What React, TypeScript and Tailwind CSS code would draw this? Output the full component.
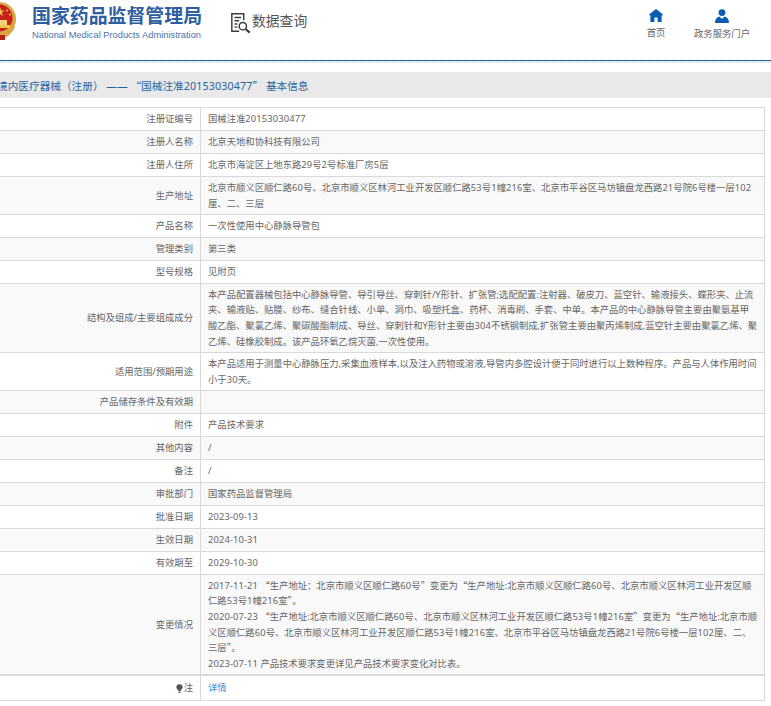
import { Fragment } from "react";

const FONT = "font-['Noto_Sans','Noto_Sans_CJK_SC',sans-serif]";

type Row = { label: string; lines: string[]; h: string };

const rows: Row[] = [
  { label: "注册证编号", lines: ["国械注准20153030477"], h: "h-[23px]" },
  { label: "注册人名称", lines: ["北京天地和协科技有限公司"], h: "h-[23px]" },
  { label: "注册人住所", lines: ["北京市海淀区上地东路29号2号标准厂房5层"], h: "h-[23px]" },
  {
    label: "生产地址",
    lines: [
      "北京市顺义区顺仁路60号、北京市顺义区林河工业开发区顺仁路53号1幢216室、北京市平谷区马坊镇盘龙西路21号院6号楼一层102",
      "厘、二、三层",
    ],
    h: "h-[38px]",
  },
  { label: "产品名称", lines: ["一次性使用中心静脉导管包"], h: "h-[23px]" },
  { label: "管理类别", lines: ["第三类"], h: "h-[23px]" },
  { label: "型号规格", lines: ["见附页"], h: "h-[23px]" },
  {
    label: "结构及组成/主要组成成分",
    lines: [
      "本产品配置器械包括中心静脉导管、导引导丝、穿刺针/Y形针、扩张管;选配配置:注射器、破皮刀、蓝空针、输液接头、蝶形夹、止流",
      "夹、输液贴、贴膜、纱布、缝合针线、小单、洞巾、吸塑托盒、药杯、消毒刷、手套、中单。本产品的中心静脉导管主要由聚氨基甲",
      "酸乙酯、聚氯乙烯、聚碳酸酯制成、导丝、穿刺针和Y形针主要由304不锈钢制成,扩张管主要由聚丙烯制成,蓝空针主要由聚氯乙烯、聚",
      "乙烯、硅橡胶制成。该产品环氧乙烷灭菌,一次性使用。",
    ],
    h: "h-[69px]",
  },
  {
    label: "适用范围/预期用途",
    lines: [
      "本产品适用于测量中心静脉压力,采集血液样本,以及注入药物或溶液,导管内多腔设计便于同时进行以上数种程序。产品与人体作用时间",
      "小于30天。",
    ],
    h: "h-[38px]",
  },
  { label: "产品储存条件及有效期", lines: [""], h: "h-[23px]" },
  { label: "附件", lines: ["产品技术要求"], h: "h-[23px]" },
  { label: "其他内容", lines: ["/"], h: "h-[23px]" },
  { label: "备注", lines: ["/"], h: "h-[23px]" },
  { label: "审批部门", lines: ["国家药品监督管理局"], h: "h-[23px]" },
  { label: "批准日期", lines: ["2023-09-13"], h: "h-[23px]" },
  { label: "生效日期", lines: ["2024-10-31"], h: "h-[23px]" },
  { label: "有效期至", lines: ["2029-10-30"], h: "h-[23px]" },
  {
    label: "变更情况",
    lines: [
      "2017-11-21 “生产地址：北京市顺义区顺仁路60号”变更为“生产地址:北京市顺义区顺仁路60号、北京市顺义区林河工业开发区顺",
      "仁路53号1幢216室”。",
      "2020-07-23 “生产地址:北京市顺义区顺仁路60号、北京市顺义区林河工业开发区顺仁路53号1幢216室”变更为“生产地址:北京市顺",
      "义区顺仁路60号、北京市顺义区林河工业开发区顺仁路53号1幢216室、北京市平谷区马坊镇盘龙西路21号院6号楼一层102厘、二、",
      "三层”。",
      "2023-07-11 产品技术要求变更详见产品技术要求变化对比表。",
    ],
    h: "h-[100px]",
  },
];

// quotes take the CJK glyph (full width), digit runs are a touch wider than Noto's
function Txt({ s }: { s: string }) {
  const parts = s.split(/([“”]|[0-9]+)/);
  return (
    <>
      {parts.map((p, i) => {
        if (p === "“" || p === "”") {
          return (
            <span key={i} className="font-['Noto_Sans_CJK_SC',sans-serif]">
              {p}
            </span>
          );
        }
        if (/^[0-9]/.test(p)) {
          return (
            <span key={i} className="tracking-[0.15px]">
              {p}
            </span>
          );
        }
        return <Fragment key={i}>{p}</Fragment>;
      })}
    </>
  );
}

function Emblem() {
  return (
    <svg viewBox="0 0 40 42" className="w-[40px] h-[42px] shrink-0">
      <circle cx="20" cy="18" r="17" fill="#d9a441" />
      <circle cx="20" cy="17" r="13.5" fill="#c8201c" />
      <path d="M21 6l1.200 3.400h3.500l-2.800 2.100 1 3.400-2.900-2-2.900 2 1-3.400-2.800-2.100h3.500z" fill="#f2c64a" />
      <circle cx="28" cy="9.500" r="1" fill="#f2c64a" />
      <circle cx="31" cy="13.500" r="1" fill="#f2c64a" />
      <path d="M9 24h22v3H9z" fill="#f2c64a" />
      <path d="M12 19h16v5H12z" fill="#f2d27a" />
      <path d="M4 26c4 8 10 12 16 12s12-4 16-12l-3-2c-3 6-8 9-13 9s-10-3-13-9z" fill="#d9a441" />
      <path d="M14 34h12v5H14z" fill="#b8201c" />
    </svg>
  );
}

function DocSearchIcon() {
  return (
    <svg viewBox="0 0 24 24" className="w-[22px] h-[22px] shrink-0" fill="none" stroke="#3c3c3c" strokeWidth="1.600">
      <path d="M15 9V2H2v19h8" />
      <path d="M5 6h7M5 9.500h5M5 13h3M5 16.500h3" />
      <circle cx="14" cy="15.500" r="4" />
      <path d="M17 18.500l4.500 4" strokeWidth="2.400" />
    </svg>
  );
}

function HomeIcon() {
  return (
    <svg viewBox="0 0 14 13" className="w-[14px] h-[13px]" fill="#0a5cb0">
      <path d="M7 0l7 5.600-.9 1-.5-.4V13H8.600V8.600H5.400V13H1.400V6.200l-.5.4-.9-1z" />
    </svg>
  );
}

function PersonIcon() {
  return (
    <svg viewBox="0 0 14 14" className="w-[14px] h-[14px]" fill="#0a5cb0">
      <circle cx="7" cy="3.600" r="3.400" />
      <path d="M0 14c0-3.600 1.800-6 4.400-6.400L7 10l2.600-2.400C12.200 8 14 10.400 14 14z" />
    </svg>
  );
}

function Pin() {
  return (
    <svg viewBox="0 0 8 10" className="w-[7px] h-[9px]" fill="#555">
      <path d="M4 0a3.600 3.600 0 0 1 3.600 3.600c0 2-2.200 3-2.600 4.400H3C2.600 6.600.4 5.600.4 3.600A3.600 3.600 0 0 1 4 0zM3 8.600h2V10H3z" />
    </svg>
  );
}

export default function App() {
  return (
    <div className={`${FONT} w-[771px] h-[706px] overflow-hidden bg-white text-[9.33px] text-[#666]`}>
      <header className="h-[60px] flex items-start">
        <div className="flex items-start -ml-[21px] pt-[1px]">
          <Emblem />
        </div>
        <div className="ml-[13px] pt-[4px] w-[190px]">
          <div className="text-[18.9px] leading-[24px] font-bold text-[#2d5e9f] whitespace-nowrap">国家药品监督管理局</div>
          <div className="text-[9.3px] leading-[12px] mt-[1px] text-[#4a73a8] font-['Liberation_Sans',sans-serif] whitespace-nowrap">
            National Medical Products Administration
          </div>
        </div>
        <div className="ml-[8px] mt-[12px] flex items-center">
          <DocSearchIcon />
          <span className="text-[13.8px] text-[#555] whitespace-nowrap -mt-[3px]">数据查询</span>
        </div>
        <nav className="ml-auto mr-[15px] mt-[9px] flex">
          <a className="w-[50px] flex flex-col items-center gap-[4px]">
            <HomeIcon />
            <span className="leading-[13px]">首页</span>
          </a>
          <a className="w-[68px] flex flex-col items-center gap-[4px] ml-[7px]">
            <PersonIcon />
            <span className="leading-[13px]">政务服务门户</span>
          </a>
        </nav>
      </header>
      <div className="h-[1px] bg-[#2a6099]" />
      <div className="h-[2px] bg-[repeating-linear-gradient(90deg,#cfdde8_0,#cfdde8_1px,#fff_1px,#fff_2px)]" />
      <div className="mt-[9px] h-[26px] bg-[#e9e9e9] flex items-center whitespace-pre text-[10.67px] text-[#2a64a0]">
        <span className="-ml-[3px] mt-[1px]">
          境内医疗器械（注册） —— <Txt s="“国械注准20153030477”" /> 基本信息
        </span>
      </div>
      <div className="mt-[9px] mr-[6px] border-y border-r border-[#d9d9d9]">
        {rows.map((r, i) => (
          <div
            key={i}
            className={`${r.h} flex border-b border-[#d9d9d9] last:border-b-0 ${i % 2 === 1 ? "bg-[#f9f9f9]" : "bg-white"}`}
          >
            <div className="w-[201px] shrink-0 flex items-center justify-end pr-[7px] border-r border-[#d9d9d9]">{r.label}</div>
            <div className="flex-1 pl-[7px] flex flex-col justify-center leading-[15.6px] whitespace-nowrap">
              {r.lines.map((l, j) => (
                <div key={j}>
                  <Txt s={l} />
                </div>
              ))}
            </div>
          </div>
        ))}
        <div className="h-[25px] flex border-t border-[#d9d9d9] bg-white">
          <div className="w-[201px] shrink-0 flex items-center justify-end gap-[1px] pr-[7px] border-r border-[#d9d9d9]">
            <Pin />
            <span>注</span>
          </div>
          <div className="flex-1 pl-[7px] flex items-center text-[#3b8ed8]">详情</div>
        </div>
      </div>
    </div>
  );
}
